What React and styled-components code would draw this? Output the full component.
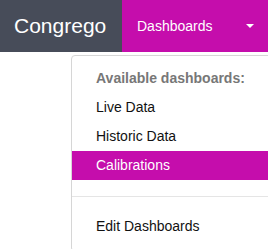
import styled, { createGlobalStyle } from 'styled-components'

const GlobalStyle = createGlobalStyle`
    html, body {
        margin: 0;
        padding: 0;
        background: #ffffff;
        font-family: "Liberation Sans", Arial, sans-serif;
    }
`

function App() {
    const items = ['Live Data', 'Historic Data', 'Calibrations']
    const active = 'Calibrations'

    return (
        <Page>
            <GlobalStyle />
            <Navbar>
                <Brand>Congrego</Brand>
                <Toggle>
                    <span>Dashboards</span>
                    <Caret />
                </Toggle>
            </Navbar>
            <Menu>
                <Header>Available dashboards:</Header>
                {items.map((item) => (
                    <Item key={item} $active={item === active}>{item}</Item>
                ))}
                <Divider />
                <Item>Edit Dashboards</Item>
            </Menu>
        </Page>
    )
}

const Page = styled.div`
    position: relative;
    width: 268px;
    height: 249px;
    overflow: hidden;
`

const Navbar = styled.nav`
    display: flex;
    height: 52px;
    background: #c50dac;
`

const Brand = styled.div`
    width: 122px;
    box-sizing: border-box;
    padding-left: 14px;
    display: flex;
    align-items: center;
    background: #474c59;
    color: #ffffff;
    font-size: 21px;
`

const Toggle = styled.div`
    flex: 1;
    display: flex;
    align-items: center;
    justify-content: space-between;
    padding: 0 14px 0 15px;
    color: #ffffff;
    font-size: 14px;
`

const Caret = styled.span`
    width: 0;
    height: 0;
    border-left: 4px solid transparent;
    border-right: 4px solid transparent;
    border-top: 4px solid #ffffff;
`

const Menu = styled.div`
    position: absolute;
    top: 55px;
    left: 71px;
    width: 240px;
    padding: 8px 0 10px;
    background: #ffffff;
    border: 1px solid #d6d6d6;
    border-radius: 4px;
`

const Header = styled.div`
    height: 29px;
    line-height: 29px;
    padding-left: 24px;
    font-size: 14px;
    font-weight: bold;
    color: #777777;
`

const Item = styled.div`
    height: 29px;
    line-height: 29px;
    padding-left: 24px;
    font-size: 14px;
    color: ${(p) => (p.$active ? '#ffffff' : '#111111')};
    background: ${(p) => (p.$active ? '#c50dac' : 'transparent')};
`

const Divider = styled.div`
    height: 1px;
    margin: 16px 0 15px;
    background: #e5e5e5;
`

export default App
